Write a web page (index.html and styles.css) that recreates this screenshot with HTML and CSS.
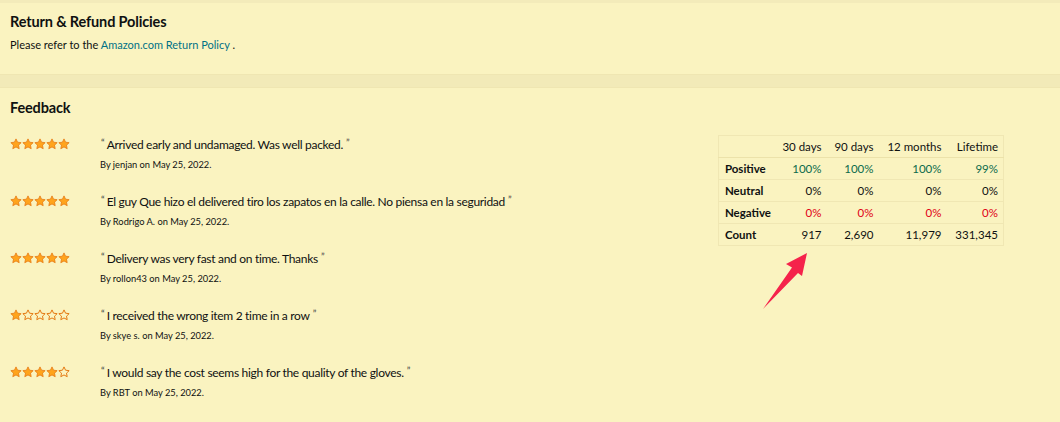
FILE: index.html
```html
<!DOCTYPE html>
<html>
<head>
<meta charset="utf-8">
<link rel="stylesheet" href="styles.css">
</head>
<body>
<div class="page">
  <div class="topstrip"></div>
  <section class="policies">
    <h2 class="title">Return &amp; Refund Policies</h2>
    <p class="policy-text">Please refer to the <a class="link">Amazon.com</a> <a class="link">Return Policy</a> .</p>
  </section>
  <div class="divider"></div>
  <section class="feedback">
    <h2 class="title">Feedback</h2>
    <div class="feedback-body">
      <ul class="reviews">
        <li class="review">
          <div class="stars" data-rating="5"></div>
          <div class="review-text">
            <p class="quote"><span class="qm">“</span>Arrived early and undamaged. Was well packed.<span class="qm qm-end">”</span></p>
            <p class="byline">By jenjan on May 25, 2022.</p>
          </div>
        </li>
        <li class="review">
          <div class="stars" data-rating="5"></div>
          <div class="review-text">
            <p class="quote"><span class="qm">“</span>El guy Que hizo el delivered tiro los zapatos en la calle. No piensa en la seguridad<span class="qm qm-end">”</span></p>
            <p class="byline">By Rodrigo A. on May 25, 2022.</p>
          </div>
        </li>
        <li class="review">
          <div class="stars" data-rating="5"></div>
          <div class="review-text">
            <p class="quote"><span class="qm">“</span>Delivery was very fast and on time. Thanks<span class="qm qm-end">”</span></p>
            <p class="byline">By rollon43 on May 25, 2022.</p>
          </div>
        </li>
        <li class="review">
          <div class="stars" data-rating="1"></div>
          <div class="review-text">
            <p class="quote"><span class="qm">“</span>I received the wrong item 2 time in a row<span class="qm qm-end">”</span></p>
            <p class="byline">By skye s. on May 25, 2022.</p>
          </div>
        </li>
        <li class="review">
          <div class="stars" data-rating="4"></div>
          <div class="review-text">
            <p class="quote"><span class="qm">“</span>I would say the cost seems high for the quality of the gloves.<span class="qm qm-end">”</span></p>
            <p class="byline">By RBT on May 25, 2022.</p>
          </div>
        </li>
      </ul>
      <table class="stats">
        <colgroup>
          <col class="c-label"><col class="c-30"><col class="c-90"><col class="c-12"><col class="c-life">
        </colgroup>
        <thead>
          <tr><th></th><th>30 days</th><th>90 days</th><th>12 months</th><th>Lifetime</th></tr>
        </thead>
        <tbody>
          <tr><td class="lbl">Positive</td><td class="pos">100%</td><td class="pos">100%</td><td class="pos">100%</td><td class="pos">99%</td></tr>
          <tr><td class="lbl">Neutral</td><td>0%</td><td>0%</td><td>0%</td><td>0%</td></tr>
          <tr><td class="lbl">Negative</td><td class="neg">0%</td><td class="neg">0%</td><td class="neg">0%</td><td class="neg">0%</td></tr>
          <tr><td class="lbl">Count</td><td>917</td><td>2,690</td><td>11,979</td><td>331,345</td></tr>
        </tbody>
      </table>
    </div>
  </section>
  <svg class="arrow" width="1060" height="422" viewBox="0 0 1060 422">
    <polygon points="807,253 786,264 792,267.5 763,309 798,273 802,276" fill="#f5234b"/>
  </svg>
</div>
<script>
document.querySelectorAll('.stars').forEach(function (el) {
  var r = +el.dataset.rating;
  var html = '';
  for (var i = 0; i < 5; i++) {
    var full = i < r;
    html += '<svg class="star" width="12" height="12" viewBox="0 0 24 24"><path d="M12 1.8l3.1 6.6 7.2.9-5.3 5 1.4 7.1L12 17.9l-6.4 3.5 1.4-7.1-5.3-5 7.2-.9z" fill="' + (full ? '#ffa41c' : 'none') + '" stroke="#e47911" stroke-width="' + (full ? '1.6' : '2') + '" stroke-linejoin="round"/></svg>';
  }
  el.innerHTML = html;
});
</script>
</body>
</html>
```

FILE: styles.css
```css
* { box-sizing: border-box; }
html, body {
  margin: 0;
  padding: 0;
  background: #faf3c0;
}
body {
  font-family: Lato, "Liberation Sans", sans-serif;
  color: #0f1111;
  width: 1060px;
  height: 422px;
  overflow: hidden;
}
.page { position: relative; width: 1060px; height: 422px; }
.topstrip { height: 3px; background: #f3ebba; }
.policies { height: 71px; padding: 10px 10px 0; }
.title {
  margin: 0;
  font-size: 14.5px;
  letter-spacing: -0.15px;
  font-weight: 700;
  line-height: 18px;
  color: #0f1111;
}
.policy-text {
  margin: 7px 0 0;
  font-size: 11px;
  line-height: 14px;
}
.link { color: #007185; text-decoration: none; }
.divider {
  height: 14px;
  background: #f2eab8;
  border-top: 1px solid #efe6b2;
  border-bottom: 1px solid #efe6b2;
}
.feedback { padding: 11px 10px 0; }
.feedback-body { display: flex; justify-content: space-between; margin-top: 12px; }
.reviews { list-style: none; margin: 0; padding: 5px 0 0; width: 600px; }
.review { display: flex; height: 57px; }
.stars { width: 90px; display: flex; padding-top: 4px; }
.star { display: block; }
.quote {
  margin: 0;
  font-size: 12px;
  letter-spacing: -0.3px;
  line-height: 16px;
}
.qm { color: #3a3d3d; font-size: 10px; vertical-align: 3px; padding: 0 2px 0 1px; letter-spacing: 0; }
.qm-end { padding: 0 0 0 3px; }
.byline {
  margin: 6px 0 0;
  font-size: 9.3px;
  line-height: 12px;
}
.stats {
  border-collapse: collapse;
  margin-right: 46px;
  margin-top: 6px;
  font-size: 11.5px;
  align-self: flex-start;
  white-space: nowrap;
}
.c-label { width: 58px; }
.c-30 { width: 49px; }
.c-90 { width: 52px; }
.c-12 { width: 68px; }
.c-life { width: 57px; }
.stats th, .stats td {
  height: 22px;
  padding: 0 5px 0 6px;
  text-align: right;
  font-weight: 400;
  border-bottom: 1px solid #f0e7b3;
}
.stats thead th { border-bottom: 1px solid #ece2aa; }
.stats tr { border-left: 1px solid #f0e7b3; border-right: 1px solid #f0e7b3; }
.stats thead tr { border-top: 1px solid #f0e7b3; }
.stats td.lbl { text-align: left; font-weight: 700; }
.stats .pos { color: #0b6b4c; }
.stats .neg { color: #e00015; }
.arrow { position: absolute; left: 0; top: 0; pointer-events: none; }
```
